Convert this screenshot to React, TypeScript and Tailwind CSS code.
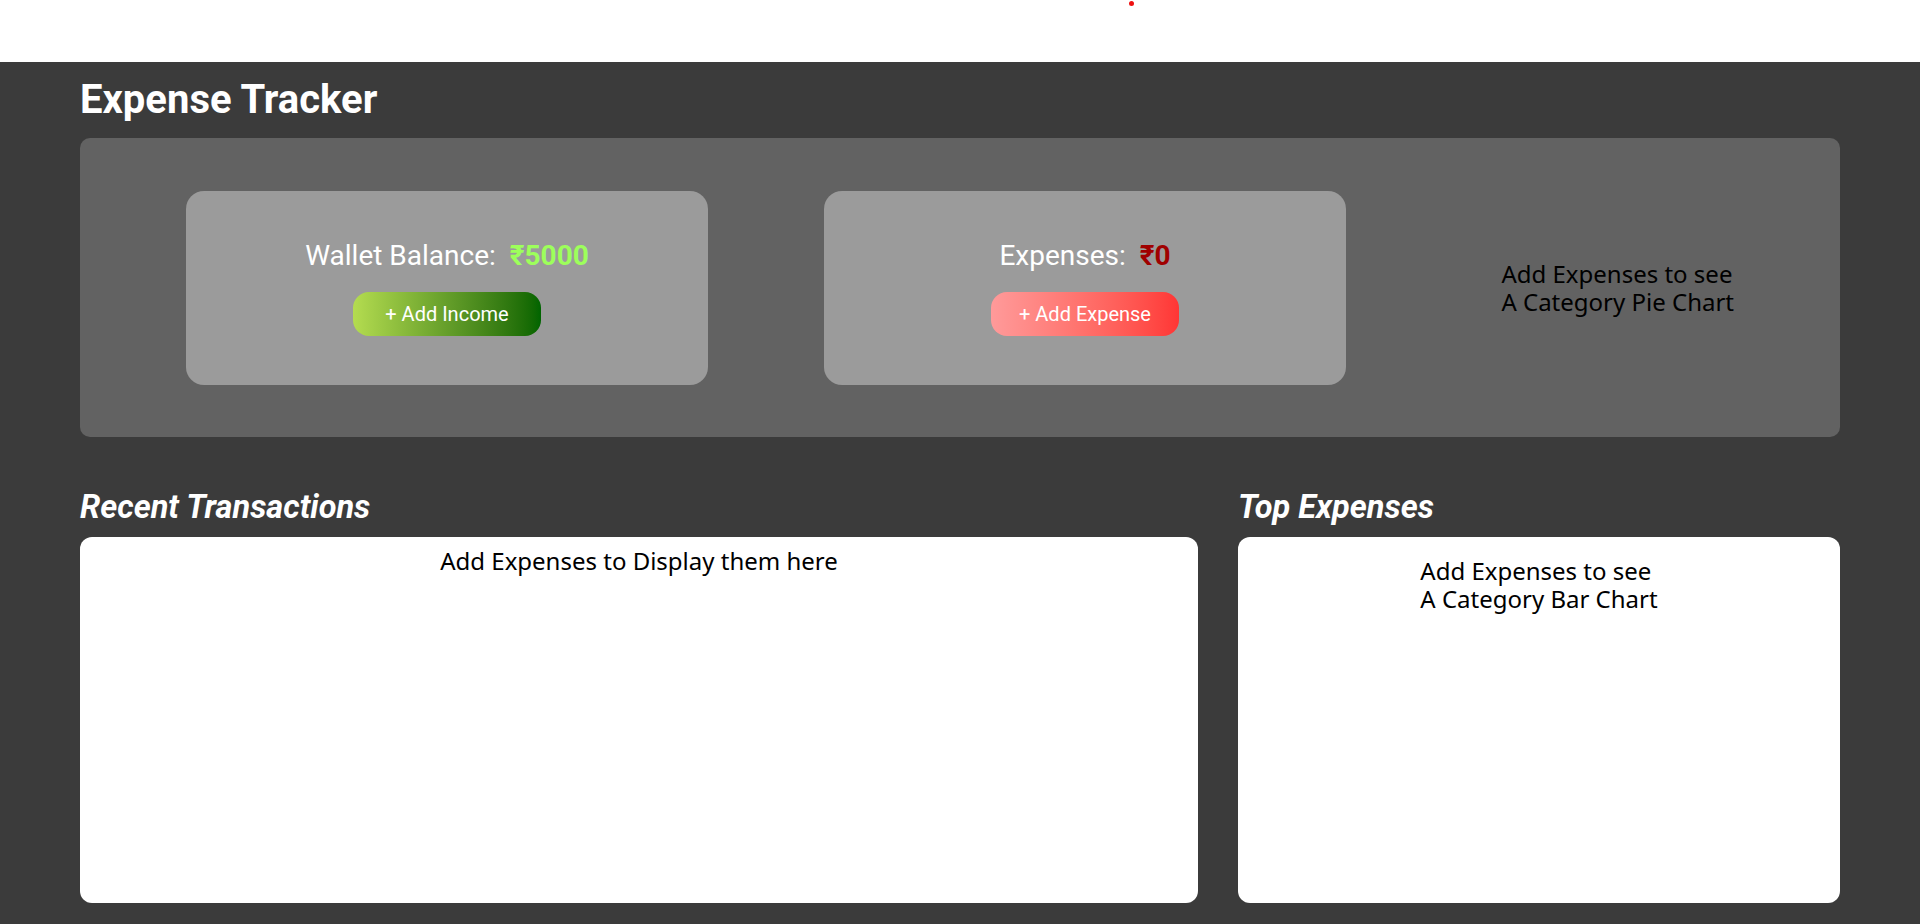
export default function App() {
  return (
    <div className="min-h-screen bg-white font-['Noto_Sans',sans-serif]">
      <div className="flex h-[62px] bg-white">
        <div className="ml-[1129px] mt-[1px] h-[5px] w-[5px] rounded-full bg-[#ee1111]" />
      </div>
      <div className="bg-[#3b3b3b] px-[80px] pb-[21px]">
        <h1 className="font-['Roboto',sans-serif] text-[40px] font-bold leading-[76px] text-white">Expense Tracker</h1>
        <div className="flex h-[299px] items-center gap-[116px] rounded-[10px] bg-[#626262] px-[106px]">
          <div className="flex h-[194px] w-[522px] flex-col items-center justify-center rounded-[18px] bg-[#9b9b9b] font-['Roboto',sans-serif]">
            <p className="text-[28px] leading-[34px] text-white">
              Wallet Balance:<span className="ml-[14px] font-bold text-[#9dff5b]">₹5000</span>
            </p>
            <button className="mt-[19px] h-[44px] w-[188px] rounded-[16px] bg-linear-to-r from-[#b4dc50] to-[#006400] text-[20px] text-white">
              + Add Income
            </button>
          </div>
          <div className="flex h-[194px] w-[522px] flex-col items-center justify-center rounded-[18px] bg-[#9b9b9b] font-['Roboto',sans-serif]">
            <p className="text-[28px] leading-[34px] text-white">
              Expenses:<span className="ml-[14px] font-bold text-[#a00000]">₹0</span>
            </p>
            <button className="mt-[19px] h-[44px] w-[188px] rounded-[16px] bg-linear-to-r from-[#ff9a9a] to-[#ff3535] text-[20px] text-white">
              + Add Expense
            </button>
          </div>
          <div className="flex flex-1 justify-end">
            <p className="text-[24px] leading-[28px] text-black">
              Add Expenses to see
              <br />A Category Pie Chart
            </p>
          </div>
        </div>
        <div className="grid grid-cols-[1118px_1fr] gap-x-[40px]">
          <div>
            <h2 className="mt-[51px] mb-[11px] font-['Roboto',sans-serif] text-[32.5px] font-bold italic leading-[38px] text-white">
              Recent Transactions
            </h2>
            <div className="h-[366px] rounded-[12px] bg-white pt-[10px] text-center">
              <p className="text-[24px] leading-[28px] text-black">Add Expenses to Display them here</p>
            </div>
          </div>
          <div>
            <h2 className="mt-[51px] mb-[11px] font-['Roboto',sans-serif] text-[32.5px] font-bold italic leading-[38px] text-white">
              Top Expenses
            </h2>
            <div className="flex h-[366px] justify-center rounded-[12px] bg-white pt-[20px]">
              <p className="text-left text-[24px] leading-[28px] text-black">
                Add Expenses to see
                <br />A Category Bar Chart
              </p>
            </div>
          </div>
        </div>
      </div>
    </div>
  );
}
